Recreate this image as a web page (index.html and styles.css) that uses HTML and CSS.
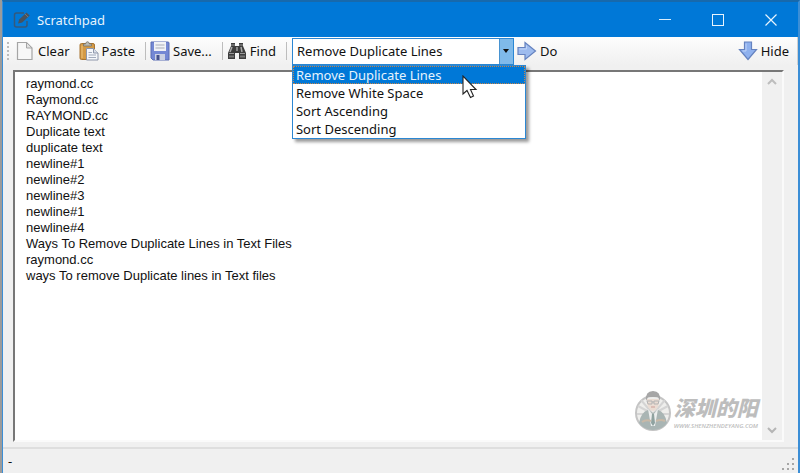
FILE: index.html
```html
<!DOCTYPE html>
<html lang="en">
<head>
<meta charset="utf-8">
<title>Scratchpad</title>
<link rel="stylesheet" href="styles.css">
</head>
<body>
<div class="window">
  <header class="titlebar">
    <svg class="app-icon" width="18" height="18" viewBox="0 0 18 18"><path d="M11 2H3.500Q1.500 2 1.500 4V14Q1.500 16 3.500 16H12Q14 16 14 14V10" fill="none" stroke="#34597c" stroke-width="1.500"/><path d="M5 12.500L6.200 8.600L13.500 1.500L16.700 4.600L9.200 11.600Z" fill="#49525c"/><path d="M12 3L15 6" stroke="#7b746e"/></svg>
    <h1 class="title">Scratchpad</h1>
    <div class="window-controls">
      <button class="win-btn" aria-label="Minimize"><svg width="12" height="12" viewBox="0 0 12 12"><path d="M0 5.500H12" stroke="#d9edfc"/></svg></button>
      <button class="win-btn" aria-label="Maximize"><svg width="12" height="12" viewBox="0 0 12 12"><rect x=".5" y=".5" width="11" height="11" fill="none" stroke="#e8f4fd"/></svg></button>
      <button class="win-btn" aria-label="Close"><svg width="12" height="12" viewBox="0 0 12 12"><path d="M.5 .5L11.500 11.500M11.500 .5L.5 11.500" stroke="#e8f4fd" stroke-width="1.200"/></svg></button>
    </div>
  </header>

  <div class="toolbar" role="toolbar" aria-label="Tools">
    <span class="grip"></span>
    <button class="tool clear"><svg width="20" height="20" viewBox="0 0 20 20"><path d="M2.500 1.500H11.500L17 7V18.500H2.500Z" fill="#f7f7f7" stroke="#a5a5a5" stroke-width="1.200"/><path d="M11.500 1.500V7H17Z" fill="#e2e2e2" stroke="#a5a5a5"/></svg>Clear</button>
    <button class="tool paste"><svg width="20" height="20" viewBox="0 0 20 20"><rect x="1" y="2.500" width="14.500" height="16" rx="1.500" fill="#d49a45" stroke="#a87431"/><path d="M3 4.500V17" stroke="#efc37b"/><path d="M4.500 5V3H6.500Q7 .7 8.500 .7T10.500 3H12.500V5Z" fill="#bcbcb4" stroke="#77736a" stroke-width=".8"/><path d="M7.500 7.500H14.500L19 12V19H7.500Z" fill="#f5f7fb" stroke="#8d96aa"/><path d="M14.500 7.500V12H19" fill="#dce1eb" stroke="#8d96aa"/><path d="M9.500 11.500H13M9.500 14H17M9.500 16.500H17" stroke="#a2abbc"/></svg>Paste</button>
    <span class="divider"></span>
    <button class="tool save"><svg width="20" height="20" viewBox="0 0 20 20"><path d="M1 1H18Q19 1 19 2V19H3L1 17Z" fill="#7488d4" stroke="#5a6db4"/><rect x="4" y="1" width="12" height="9" fill="#f1f2f6"/><path d="M5.500 4H14.500M5.500 7H14.500" stroke="#a9acb7"/><path d="M5 13H15V19H5Z" fill="#cbd1e3"/><path d="M6.500 14H9.500V19H6.500Z" fill="#46528d"/></svg>Save...</button>
    <span class="divider"></span>
    <button class="tool find"><svg width="20" height="20" viewBox="0 0 20 20"><path d="M4 2H8V5H12V2H16V5L19 12V18H12V12H8V18H1V12L4 5Z" fill="#3d3d3d"/><path d="M4 4H8M12 4H16M2 12.500H7M13 12.500H18" stroke="#999"/><path d="M5 6L3 11M14 6L15 11" stroke="#aaa" stroke-width="1.500"/><rect x="9" y="6" width="2" height="4" fill="#888"/><path d="M2 15.500H7M13 15.500H18" stroke="#777" stroke-width="2"/></svg>Find</button>
    <span class="divider last"></span>
    <div class="combo">
      <select class="combo-select" aria-label="Action">
        <option>Remove Duplicate Lines</option>
        <option>Remove White Space</option>
        <option>Sort Ascending</option>
        <option>Sort Descending</option>
      </select>
      <span class="combo-arrow"><svg width="6" height="4" viewBox="0 0 6 4"><path d="M0 0H6L3 4Z" fill="#111"/></svg></span>
      <ul class="menu" role="listbox" aria-label="Actions">
        <li class="menu-item selected" role="option" aria-selected="true">Remove Duplicate Lines</li>
        <li class="menu-item" role="option">Remove White Space</li>
        <li class="menu-item" role="option">Sort Ascending</li>
        <li class="menu-item" role="option">Sort Descending</li>
      </ul>
      <svg class="cursor" width="16" height="24" viewBox="0 0 16 24"><path d="M1 1V19L5 15.500L8.500 22.500L11.500 21L8.500 14.500H14Z" fill="#fff" stroke="#222" stroke-width="1.100"/></svg>
    </div>
    <button class="tool do"><svg width="20" height="20" viewBox="0 0 20 20"><path d="M1 6.500H8V1.500L18.500 10L8 18.500V13.500H1Z" fill="#9dbbee" stroke="#6582bf" stroke-width="1.200"/><path d="M2.500 8H9.500V4.500" fill="none" stroke="#bfd3f7"/></svg>Do</button>
    <button class="tool hide"><svg width="20" height="20" viewBox="0 0 20 20"><path d="M6.500 1H13.500V8.500H18.500L10 18.500L1.500 8.500H6.500Z" fill="#8fb1ee" stroke="#6582bf" stroke-width="1.200"/><path d="M8 2.500V10H4.500" fill="none" stroke="#bfd3f7"/></svg>Hide</button>
  </div>

  <main class="editor">
    <textarea class="text" aria-label="Scratchpad text" spellcheck="false">raymond.cc
Raymond.cc
RAYMOND.cc
Duplicate text
duplicate text
newline#1
newline#2
newline#3
newline#1
newline#4
Ways To Remove Duplicate Lines in Text Files
raymond.cc
ways To remove Duplicate lines in Text files</textarea>
    <div class="scrollbar">
      <button class="scroll-btn" aria-label="Scroll up"><svg width="10" height="8" viewBox="0 0 10 8"><path d="M1 6L5 2L9 6" fill="none" stroke="#bdbdbd" stroke-width="2"/></svg></button>
      <button class="scroll-btn" aria-label="Scroll down"><svg width="10" height="8" viewBox="0 0 10 8"><path d="M1 2L5 6L9 2" fill="none" stroke="#b5b5b5" stroke-width="2"/></svg></button>
    </div>
    <div class="watermark">
      <svg width="38" height="44" viewBox="0 0 38 44">
        <circle cx="19" cy="24" r="17" fill="#eeeeec" stroke="#c4c4c4" stroke-width="2"/>
        <path d="M19 25L4 17M19 25L7 11M19 25L31 11M19 25L34 17M19 25L3 25M19 25L35 25" stroke="#d4d4d4" stroke-width="2"/>
        <path d="M5 34Q7 23 14 21L19 24L24 21Q31 23 33 34Q28 41 19 41T5 34Z" fill="#a9b5b4"/>
        <path d="M14 20L19 26L24 20L21 37H17Z" fill="#eceeee"/><path d="M18 25H20L21 34L19 37L17 34Z" fill="#8fa2a0"/>
        <path d="M13 10Q12 20 19 22Q26 20 25 10Z" fill="#eadcd3"/>
        <path d="M12 12Q11 2 19 2T26 12L24 8H14Z" fill="#a6a6a6"/>
        <path d="M13 12H18V15H14ZM20 12H25L24 15H20ZM18 13H20" fill="none" stroke="#b4b4b4"/>
        <path d="M17 18H21" stroke="#cc9f98"/><path d="M8 33Q12 30 17 32M22 32Q27 30 31 32" fill="none" stroke="#c9b9a7" stroke-width="2"/>
      </svg>
      <div class="brand"><span class="brand-name" lang="zh-CN">深圳的阳</span><span class="brand-url">WWW.SHENZHENDEYANG.COM</span></div>
    </div>
  </main>

  <footer class="status"><span>-</span>
    <svg class="resize" width="14" height="14" viewBox="0 0 14 14"><path d="M10 1h2v2h-2zM5 6h2v2h-2zM10 6h2v2h-2zM0 11h2v2h-2zM5 11h2v2h-2zM10 11h2v2h-2z" fill="#a6a6a6"/></svg>
  </footer>
</div>
</body>
</html>
```
FILE: styles.css
```css
* { box-sizing: border-box; }

body {
  margin: 0;
  background: #9b9b9b;
  color: #111;
  font: 13px/18px "Noto Sans", "Open Sans", sans-serif;
}

button {
  border: 0;
  padding: 0;
  background: none;
  color: inherit;
  font: inherit;
}

svg { display: block; flex: none; }

.window {
  display: flex;
  flex-direction: column;
  height: 100vh;
  margin-left: 2px;
  border: 1px solid #3b8ed6;
  border-width: 2px 2px 0 1px;
  border-top-color: #1769ac;
  background: #f0f0f0;
}

.titlebar {
  display: flex;
  align-items: center;
  height: 35px;
  padding: 0 1px 0 10px;
  background: #0078d7;
  color: #e6f3fd;
}

.title {
  margin: 0 0 0 6px;
  font-size: 13px;
  font-weight: 400;
}

.window-controls { display: flex; margin-left: auto; }

.win-btn {
  display: grid;
  place-items: center;
  width: 53px;
  height: 34px;
}

.toolbar {
  display: flex;
  align-items: center;
  height: 28px;
  padding: 0 8px 0 4px;
  background: linear-gradient(#fdfdfd, #f0f0f0);
  border-right: 1px solid #d0d0d0;
}

.grip {
  width: 2px;
  height: 18px;
  background: repeating-linear-gradient(#bcbcbc 0 2px, transparent 2px 4px);
}

.tool { display: flex; align-items: center; gap: 3px; white-space: nowrap; }
.clear { margin-left: 6px; }
.paste { margin-left: 9px; }
.save { margin-left: 4px; }
.find { margin-left: 4px; }
.do { margin-left: 3px; }
.hide { margin-left: auto; }

.divider {
  width: 1px;
  height: 18px;
  margin-left: 10px;
  background: #bdbdbd;
}

.last { margin-right: 5px; }

.combo {
  position: relative;
  display: flex;
  width: 222px;
  height: 27px;
  border: 1px solid #2b87d3;
  background: #fff;
}

.combo-select {
  flex: 1;
  min-width: 0;
  padding: 0 4px;
  border: 0;
  outline: 0;
  appearance: none;
  background: #fff;
  color: inherit;
  font: inherit;
}

.combo-arrow {
  display: grid;
  place-items: center;
  width: 14px;
  border-left: 1px solid #4793d1;
  background: #7fbaea;
}

.menu {
  position: absolute;
  z-index: 2;
  top: 26px;
  left: -1px;
  width: 234px;
  margin: 0;
  border: 1px solid #2b87d3;
  padding: 0;
  background: #fff;
  box-shadow: 3px 3px 3px #0006;
  list-style: none;
}

.menu-item { height: 18px; padding-left: 3px; line-height: 18px; }

.selected {
  outline: 1px dotted #c58449;
  outline-offset: -1px;
  background: #0078d7;
  color: #e6f3fd;
}

.cursor {
  position: absolute;
  z-index: 3;
  top: 36px;
  left: 169px;
}

.editor {
  position: relative;
  display: flex;
  flex: 1;
  min-height: 0;
  margin: 5px 14px 5px 10px;
  border: 2px solid #fafafa;
  border-top-color: #777;
  border-left-color: #777;
  background: #fff;
}

.text {
  flex: 1;
  min-width: 0;
  padding: 4px 11px;
  border: 0;
  outline: 0;
  overflow: hidden;
  resize: none;
  background: #fff;
  color: #111;
  font: 13px/16px "Liberation Sans", Arial, sans-serif;
}

.scrollbar {
  display: flex;
  flex-direction: column;
  justify-content: space-between;
  width: 20px;
  background: #f0f0f0;
}

.scroll-btn { display: grid; place-items: center; height: 20px; }

.watermark {
  position: absolute;
  right: 24px;
  bottom: 7px;
  display: flex;
  align-items: center;
  gap: 2px;
  color: #bdbdbd;
}

.brand { display: flex; flex-direction: column; }

.brand-name {
  font: italic 900 21px/30px "Noto Sans CJK SC", sans-serif;
}

.brand-url {
  font: italic 600 6px/8px "Open Sans", sans-serif;
}

.status {
  display: flex;
  align-items: center;
  justify-content: space-between;
  height: 26px;
  padding: 0 2px 0 5px;
  border-top: 2px solid #dedede;
}

.resize { align-self: flex-end; margin-bottom: 2px; }
```
